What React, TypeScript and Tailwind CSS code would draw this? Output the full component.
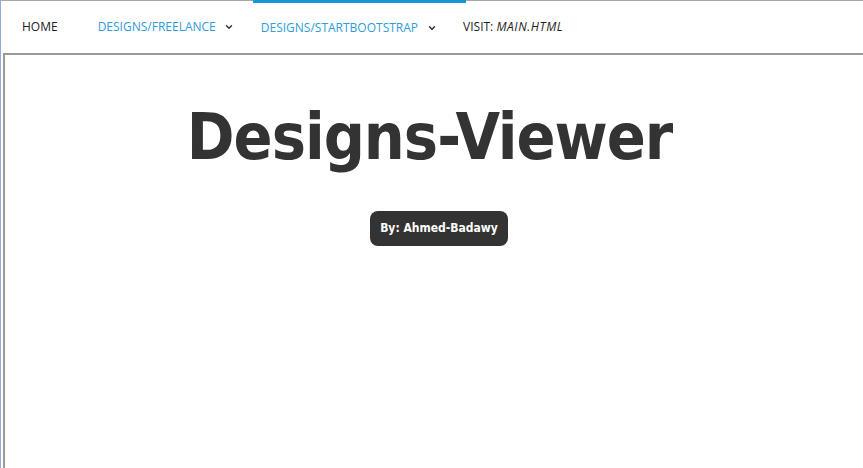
import { ChevronDown } from "lucide-react";

const navFont = { fontFamily: '"Open Sans", "Noto Sans", sans-serif' };
const titleFont = { fontFamily: '"DejaVu Sans Condensed", "DejaVu Sans", sans-serif' };

export default function App() {
  return (
    <div className="h-[468px] w-[863px] overflow-hidden border-l border-[#8cadd6] bg-white">
      {/* Top navigation */}
      <nav className="flex h-[53px] items-stretch border-t border-[#a8a8a8] text-[12px]" style={navFont}>
        <a className="flex items-center pl-[21px] pr-[40px] text-[#222]">HOME</a>
        <a className="flex items-center gap-[8px] pr-[19px] text-[#2f9bdc]">
          DESIGNS/FREELANCE
          <ChevronDown className="h-[10px] w-[10px] text-[#333]" strokeWidth={3.5} />
        </a>
        <a className="-mt-px flex items-center gap-[9px] border-t-[3px] border-[#1a94d9] pl-[8px] pr-[29px] text-[#2f9bdc]">
          DESIGNS/STARTBOOTSTRAP
          <ChevronDown className="h-[10px] w-[10px] text-[#333]" strokeWidth={3.5} />
        </a>
        <a className="-ml-[3px] flex items-center text-[#222]">
          VISIT:&nbsp;<i className="tracking-[0.6px]">MAIN.HTML</i>
        </a>
      </nav>

      {/* Viewer frame */}
      <div className="ml-[2px] h-full border-l-[2px] border-t-[2px] border-[#999]">
        <div className="flex flex-col items-center pt-[50px]">
          <h1 className="mr-[9px] text-[64px] font-bold leading-none tracking-[-1px] text-[#333]" style={titleFont}>
            Designs-Viewer
          </h1>
          <span
            className="ml-[10px] mt-[42px] rounded-[8px] bg-[#333] px-[10px] py-[9px] text-[12px] font-bold leading-[17px] text-white"
            style={titleFont}
          >
            By: Ahmed-Badawy
          </span>
        </div>
      </div>
    </div>
  );
}
